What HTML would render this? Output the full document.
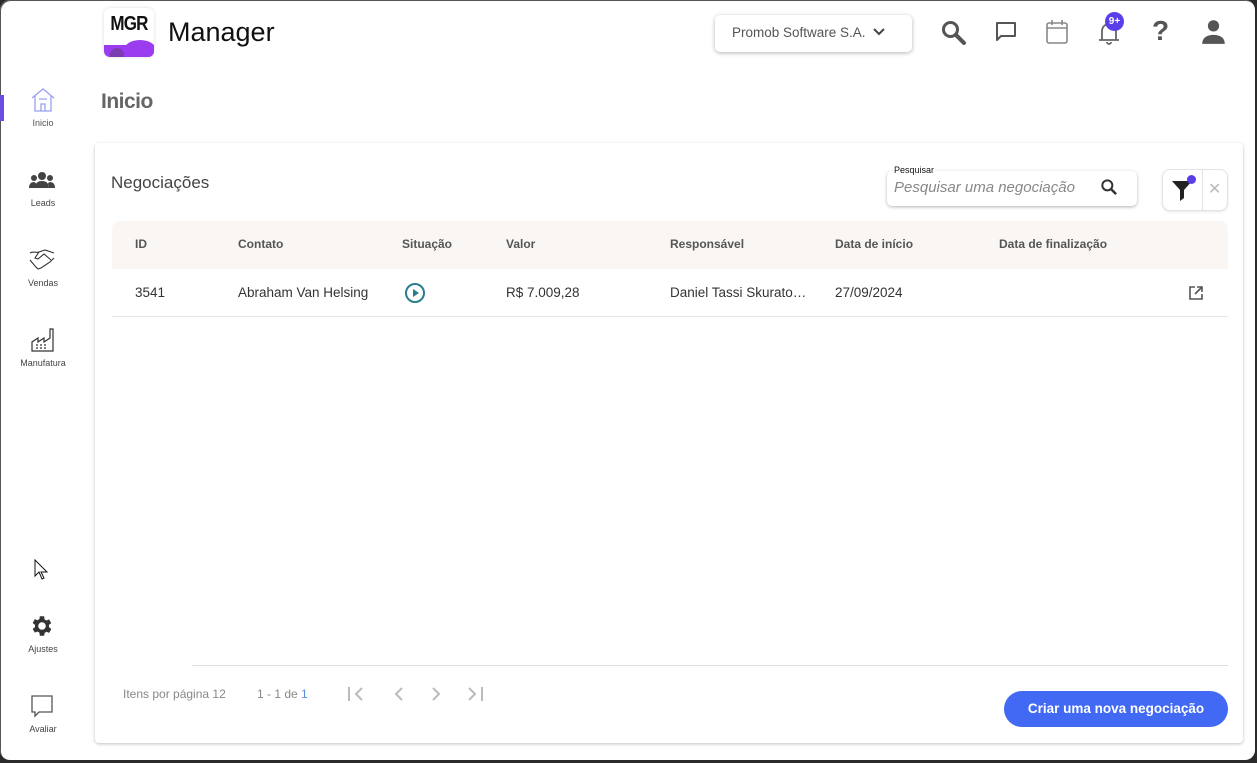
<!DOCTYPE html>
<html><head><meta charset="utf-8"><style>
*{box-sizing:border-box;margin:0;padding:0}
body{width:1257px;height:763px;background:#2a2a2a;font-family:"Liberation Sans",sans-serif;overflow:hidden;position:relative}
.frame{position:absolute;left:0;top:0;width:1255px;height:760px;background:#fff;border-radius:10px;overflow:hidden;box-shadow:inset 1px 1px 0 #555}
.abs{position:absolute}
.nav{position:absolute;left:0;width:86px;text-align:center;font-size:9px;color:#444}
.card{position:absolute;left:95px;top:143px;width:1148px;height:600px;background:#fff;border-radius:4px;box-shadow:0 1px 3px rgba(0,0,0,.25)}
.th{position:absolute;top:16px;font-size:12px;font-weight:bold;color:#555}
.td{position:absolute;top:64px;font-size:13.5px;color:#333}
</style></head><body>
<div class="frame">
<div class="abs" style="left:0;top:95px;width:4px;height:26px;background:#6a4ce0"></div>
<!-- logo -->
<div class="abs" style="left:104px;top:8px;width:50px;height:49px;border-radius:6px;overflow:hidden;background:#fff;box-shadow:0 0 3px rgba(0,0,0,.15)">
 <div class="abs" style="left:0;top:5px;width:50px;text-align:center;font-weight:bold;font-size:20px;color:#111;letter-spacing:-1px;transform:scaleX(.85)">MGR</div>
 <div class="abs" style="left:0;top:37px;width:50px;height:12px;background:#9b3cf0"></div>
 <div class="abs" style="left:20px;top:32px;width:32px;height:20px;border-radius:50% 50% 0 0;background:#9b3cf0"></div>
 <div class="abs" style="left:6px;top:40px;width:14px;height:14px;border-radius:50%;background:#7a3cb0"></div>
</div>
<div class="abs" style="left:168px;top:17px;font-size:27px;color:#111">Manager</div>
<div class="abs" style="left:715px;top:15px;width:197px;height:37px;border-radius:5px;box-shadow:0 1px 4px rgba(0,0,0,.3);background:#fff;font-size:13.5px;color:#555;padding:10px 0 0 17px">Promob Software S.A. <svg width="14" height="10" viewBox="0 0 14 10" style="margin-left:3px"><path d="M2 2l5 5 5-5" stroke="#444" stroke-width="2" fill="none"/></svg></div>
<svg class="abs" style="left:940px;top:19px" width="28" height="28" viewBox="0 0 24 24"><circle cx="9" cy="9" r="6" stroke="#555" stroke-width="2.6" fill="none"/><path d="M13.5 13.5l7 7" stroke="#555" stroke-width="3.5" stroke-linecap="round"/></svg>
<svg class="abs" style="left:994px;top:20px" width="24" height="24" viewBox="0 0 24 24"><path d="M3 3h18v13H7l-4 4z" stroke="#555" stroke-width="2" fill="none" stroke-linejoin="round"/></svg>
<svg class="abs" style="left:1045px;top:19px" width="24" height="26" viewBox="0 0 24 26"><rect x="2" y="4" width="20" height="20" rx="2" stroke="#888" stroke-width="1.6" fill="none"/><path d="M2 9h20M7 1v5M17 1v5" stroke="#888" stroke-width="1.6"/></svg>
<svg class="abs" style="left:1097px;top:19px" width="26" height="28" viewBox="0 0 26 28"><path d="M5 21V12a7 7 0 0114 0v9h3H2zM10 23a2 2 0 004 0" stroke="#666" stroke-width="1.8" fill="none"/></svg>
<div class="abs" style="left:1105px;top:12px;width:19px;height:19px;border-radius:50%;background:#5b3ee8;color:#fff;font-size:10px;font-weight:bold;text-align:center;line-height:19px">9+</div>
<div class="abs" style="left:1152px;top:15px;font-size:28px;font-weight:bold;color:#555">?</div>
<svg class="abs" style="left:1200px;top:18px" width="27" height="27" viewBox="0 0 24 24"><circle cx="12" cy="7" r="5" fill="#555"/><path d="M2 23c0-6 5-8 10-8s10 2 10 8z" fill="#555"/></svg>
<svg class="abs" style="left:30px;top:87px" width="26" height="26" viewBox="0 0 26 26"><path d="M2 11L13 2l11 9M5 9v15h16V9M11 24v-7h4v7M9 12h8" stroke="#99a0f0" stroke-width="1.3" fill="none"/></svg>
<div class="nav" style="top:118px;color:#555">Inicio</div>
<svg class="abs" style="left:29px;top:171px" width="26" height="18" viewBox="0 0 26 18"><circle cx="13" cy="5" r="4" fill="#444"/><circle cx="5" cy="7" r="3" fill="#444"/><circle cx="21" cy="7" r="3" fill="#444"/><path d="M6 17c0-5 3-7 7-7s7 2 7 7zM0 17c0-4 2-6 5-6l2 1-1 5zM26 17c0-4-2-6-5-6l-2 1 1 5z" fill="#444"/></svg>
<div class="nav" style="top:198px">Leads</div>
<svg class="abs" style="left:28px;top:248px" width="28" height="26" viewBox="0 0 28 26"><path d="M2 5c3-2 6 0 9-1l6-2 9 3M2 12l5 6 3 3 3-1 9-6 4-4M11 4l-4 6 3 1 6-5 7 6" stroke="#333" stroke-width="1.1" fill="none"/></svg>
<div class="nav" style="top:278px">Vendas</div>
<svg class="abs" style="left:30px;top:327px" width="26" height="26" viewBox="0 0 26 26"><path d="M2 24V15l6-4v4l6-4v4l6-4V2h3v22z" stroke="#333" stroke-width="1.2" fill="none"/><path d="M6 18h2M10 18h2M14 18h2M6 21h2M10 21h2M14 21h2" stroke="#333" stroke-width="1.2"/></svg>
<div class="nav" style="top:358px">Manufatura</div>
<svg class="abs" style="left:34px;top:559px" width="16" height="22" viewBox="0 0 16 22"><path d="M1 1v16l4-4 3 7 2-1-3-6h6z" stroke="#111" stroke-width="1" fill="#fff"/></svg>
<svg class="abs" style="left:29px;top:613px" width="26" height="26" viewBox="0 0 24 24"><path fill="#333" d="M19.4 13a7.5 7.5 0 000-2l2.1-1.6-2-3.5-2.5 1a7 7 0 00-1.7-1L15 3h-4l-.4 2.7a7 7 0 00-1.7 1l-2.5-1-2 3.5L6.6 11a7.5 7.5 0 000 2l-2.2 1.6 2 3.5 2.5-1a7 7 0 001.7 1L11 21h4l.4-2.7a7 7 0 001.7-1l2.5 1 2-3.5zM13 15.5a3.5 3.5 0 110-7 3.5 3.5 0 010 7z" transform="translate(-1 0)"/></svg>
<div class="nav" style="top:644px">Ajustes</div>
<svg class="abs" style="left:30px;top:694px" width="24" height="24" viewBox="0 0 24 24"><path d="M2 2h20v16H9l-4 4v-4H2z" stroke="#555" stroke-width="1.3" fill="none"/></svg>
<div class="nav" style="top:724px">Avaliar</div>
<div class="abs" style="left:101px;top:90px;font-size:21px;color:#666;font-weight:bold;letter-spacing:-.5px">Inicio</div>
<div class="card">
 <div class="abs" style="left:16px;top:30px;font-size:17px;color:#444">Negociações</div>
 <div class="abs" style="left:792px;top:28px;width:250px;height:35px;border-radius:5px;box-shadow:0 1px 3px rgba(0,0,0,.3);background:#fff"></div>
 <div class="abs" style="left:798px;top:22px;font-size:9px;color:#111;background:#fff;padding:0 1px">Pesquisar</div>
 <div class="abs" style="left:799px;top:36px;font-size:15px;color:#888;font-style:italic">Pesquisar uma negociação</div>
 <svg class="abs" style="left:1004px;top:34px" width="20" height="20" viewBox="0 0 24 24"><circle cx="10" cy="10" r="6" stroke="#333" stroke-width="2.4" fill="none"/><path d="M14.5 14.5l6 6" stroke="#333" stroke-width="3"/></svg>
 <div class="abs" style="left:1067px;top:26px;width:66px;height:42px;border-radius:8px;border:1px solid #e3e3e3;box-shadow:0 1px 2px rgba(0,0,0,.1)"></div>
 <div class="abs" style="left:1107px;top:27px;width:1px;height:40px;background:#e3e3e3"></div>
 <svg class="abs" style="left:1076px;top:36px" width="22" height="22" viewBox="0 0 22 22"><path d="M1 2h20l-8 9v8l-4 3V11z" fill="#222"/></svg>
 <div class="abs" style="left:1092px;top:32px;width:9px;height:9px;border-radius:50%;background:#5b3ee8"></div>
 <div class="abs" style="left:1113px;top:36px;font-size:16px;color:#bbb">✕</div>
 <div class="abs" style="left:17px;top:78px;width:1116px;height:48px;background:#f9f6f3;border-radius:8px 8px 0 0">
  <div class="th" style="left:23px">ID</div><div class="th" style="left:126px">Contato</div><div class="th" style="left:290px">Situação</div><div class="th" style="left:394px">Valor</div><div class="th" style="left:558px">Responsável</div><div class="th" style="left:723px">Data de início</div><div class="th" style="left:887px">Data de finalização</div>
 </div>
 <div class="abs" style="left:17px;top:78px;width:1116px;height:96px;border-bottom:1px solid #e4e4e4">
  <div class="td" style="left:23px">3541</div><div class="td" style="left:126px">Abraham Van Helsing</div>
  <svg class="abs" style="left:292px;top:61px" width="22" height="22" viewBox="0 0 22 22"><circle cx="11" cy="11" r="9" stroke="#2a7d8e" stroke-width="2" fill="none"/><path d="M9 7v8l6-4z" fill="#2a7d8e"/></svg>
  <div class="td" style="left:394px">R$ 7.009,28</div><div class="td" style="left:558px">Daniel Tassi Skurato…</div><div class="td" style="left:723px">27/09/2024</div>
  <svg class="abs" style="left:1076px;top:64px" width="16" height="16" viewBox="0 0 16 16"><path d="M7 2H2v12h12V9M9 2h5v5M14 2L7 9" stroke="#555" stroke-width="1.6" fill="none"/></svg>
 </div>
 <div class="abs" style="left:97px;top:522px;width:1036px;height:1px;background:#e0e0e0"></div>
 <div class="abs" style="left:28px;top:544px;font-size:12px;color:#888">Itens por página 12</div>
 <div class="abs" style="left:162px;top:544px;font-size:12px;color:#888">1 - 1 de <span style="color:#5b8fd8">1</span></div>
 <svg class="abs" style="left:250px;top:541px" width="145" height="20" viewBox="0 0 145 20"><g stroke="#bbb" stroke-width="2" fill="none"><path d="M4 3v14M17 4l-6 6 6 6M57 4l-6 6 6 6M88 4l6 6-6 6M124 4l6 6-6 6M137 3v14"/></g></svg>
 <div class="abs" style="left:909px;top:548px;width:224px;height:36px;border-radius:18px;background:#4169f4;color:#fff;font-size:13.5px;font-weight:bold;text-align:center;line-height:36px">Criar uma nova negociação</div>
</div>
</div>
</body></html>
